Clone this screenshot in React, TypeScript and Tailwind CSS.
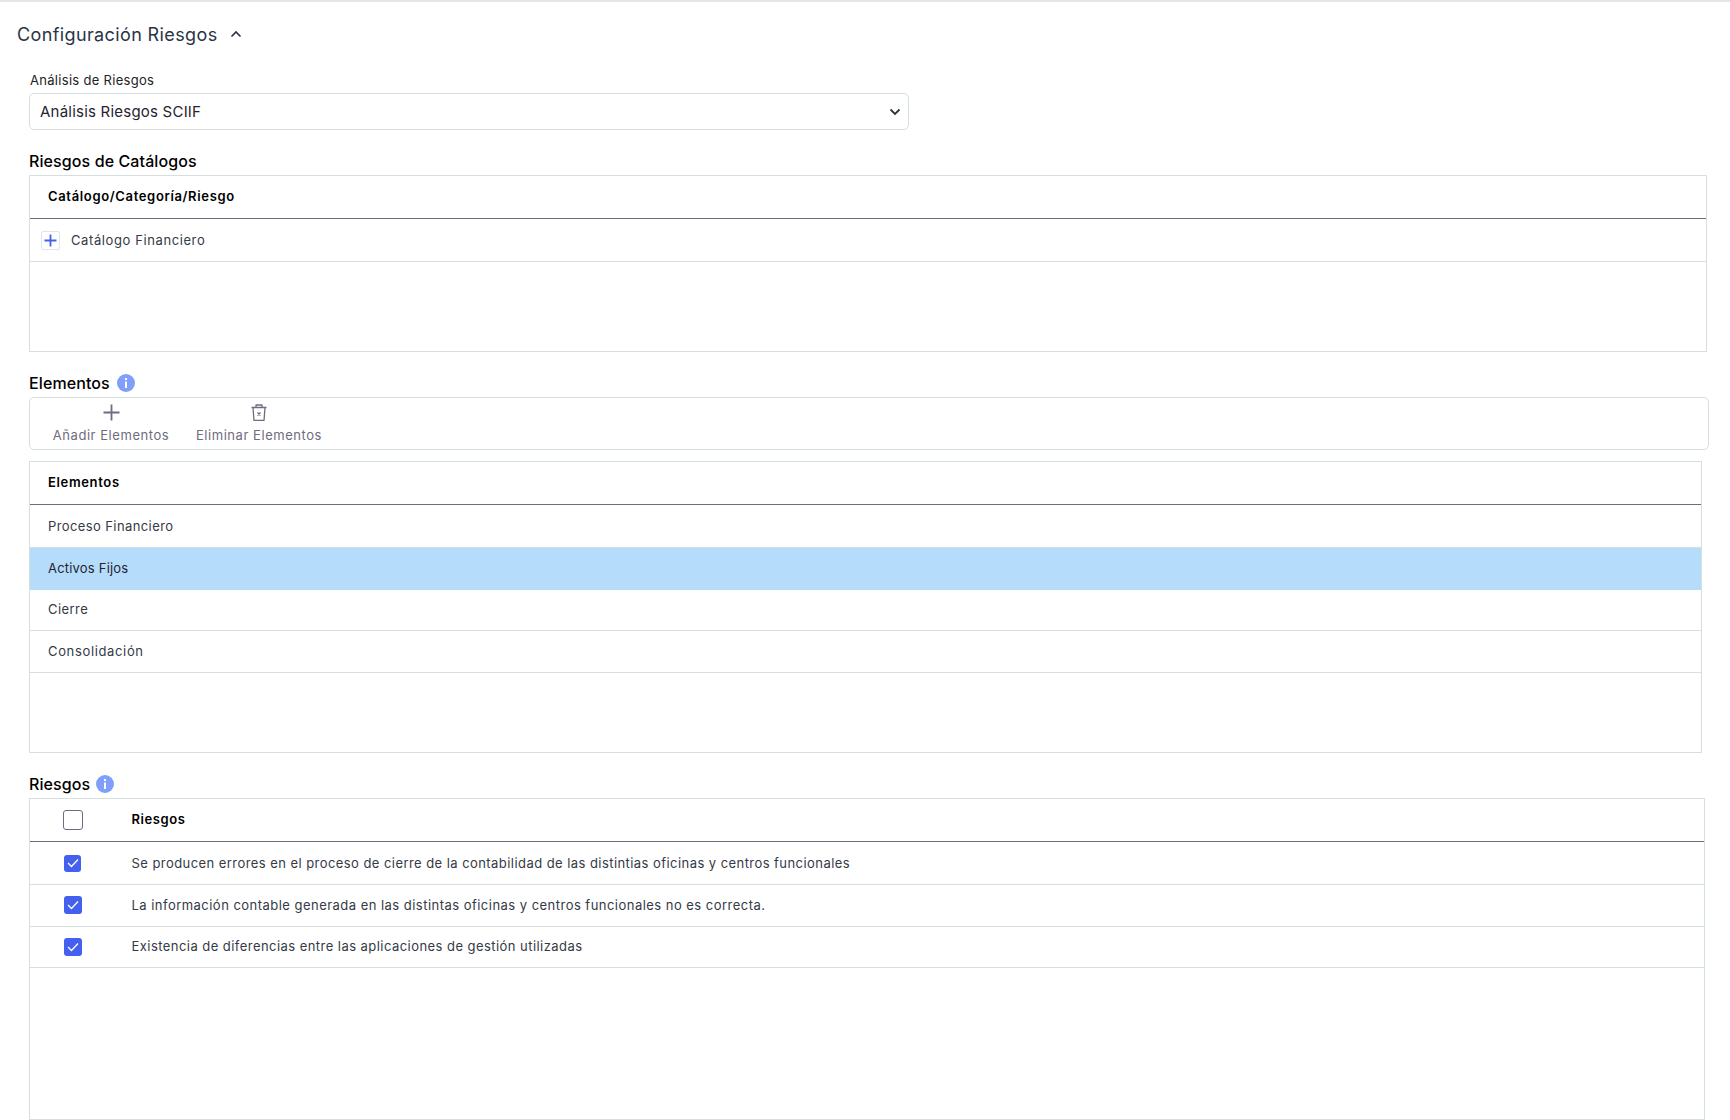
import React from "react";

const font = { fontFamily: '"Inter", "Open Sans", sans-serif' };

function Info() {
  return (
    <svg width="18" height="18" viewBox="0 0 18 18" className="shrink-0">
      <circle cx="9" cy="9" r="9" fill="#7f9ffb" />
      <rect x="8" y="7.5" width="2" height="6.5" fill="#fff" />
      <rect x="8" y="4" width="2" height="2" fill="#fff" />
    </svg>
  );
}

function Check({ size }: { size: string }) {
  return (
    <span className={`${size} rounded-[3px] bg-[#4361ee] flex items-center justify-center`}>
      <svg width="12" height="10" viewBox="0 0 12 10" fill="none">
        <path d="M1 5l3.5 3.5L11 1.5" stroke="#fff" strokeWidth="1.3" />
      </svg>
    </span>
  );
}

function HeaderCell({ children }: { children: React.ReactNode }) {
  return (
    <div className="h-[43px] border-b border-[#6f6c80] pl-[18px] flex items-center text-[13px] tracking-[0.65px] font-semibold text-black">
      {children}
    </div>
  );
}

const rowText = "text-[13px] tracking-[0.45px] text-[#343a46]";
const heading = "text-[16px] tracking-[0.1px] leading-[20px] font-medium text-black";

export default function App() {
  return (
    <div className="w-[1730px] h-[1120px] bg-white overflow-hidden border-t-2 border-[#e5e5e5]" style={font}>
      <div className="pl-[17px] pt-[22px] h-[62px] flex items-start gap-[12px]">
        <span className="text-[18px] tracking-[0.38px] leading-[22px] text-[#2b3444]">Configuración Riesgos</span>
        <svg width="12" height="8" viewBox="0 0 12 8" fill="none" className="mt-[6px]">
          <path d="M1.5 6.5L6 2l4.5 4.5" stroke="#2b3444" strokeWidth="1.6" />
        </svg>
      </div>

      <div className="pl-[29px]">
        <div className="h-[29px] pt-[7px] pl-px text-[13px] tracking-[0.3px] leading-[18px] text-[#222]">Análisis de Riesgos</div>
        <div className="w-[880px] h-[37px] border border-[#d5dfdd] rounded-[5px] flex items-center justify-between pl-[10px] pr-[7px]">
          <span className="text-[15px] tracking-[0.22px] pt-px text-[#1f2430]">Análisis Riesgos SCIIF</span>
          <svg width="12" height="8" viewBox="0 0 12 8" fill="none">
            <path d="M1.5 1.5L6 6l4.5-4.5" stroke="#2b3444" strokeWidth="1.8" />
          </svg>
        </div>

        <div className="h-[45px] flex items-end pb-[4px]"><span className={heading}>Riesgos de Catálogos</span></div>
        <div className="w-[1678px] h-[177px] border border-[#d5dfdd]">
          <HeaderCell>Catálogo/Categoría/Riesgo</HeaderCell>
          <div className="h-[43px] border-b border-[#d5dfdd] flex items-center pl-[11px] gap-[11px]">
            <span className="w-[19px] h-[19px] border border-[#dfe5e8] rounded-[2px] flex items-center justify-center">
              <svg width="13" height="13" viewBox="0 0 13 13">
                <path d="M6.5 0.5v12M0.5 6.5h12" stroke="#4361ee" strokeWidth="1.8" />
              </svg>
            </span>
            <span className="text-[13px] tracking-[0.6px] text-[#343a46] pt-px">Catálogo Financiero</span>
          </div>
        </div>

        <div className="h-[45px] flex items-end pb-[4px] gap-[7px]">
          <span className={heading}>Elementos</span>
          <span className="pb-px"><Info /></span>
        </div>
        <div className="w-[1680px] h-[53px] border border-[#d5dfdd] rounded-[5px] flex pl-[7px] text-[13px] tracking-[0.55px] text-[#6f6c80]">
          <div className="w-[148px] flex flex-col items-center pt-[6px]">
            <svg width="17" height="17" viewBox="0 0 17 17"><path d="M8.5 0.5v16M0.5 8.5h16" stroke="#6f6c80" strokeWidth="1.8" /></svg>
            <span className="leading-[18px] mt-[5px]">Añadir Elementos</span>
          </div>
          <div className="w-[148px] flex flex-col items-center pt-[6px]">
            <svg width="16" height="17" viewBox="0 0 16 17" fill="none" stroke="#6f6c80" strokeWidth="1.3" strokeLinejoin="round">
              <path d="M0.5 3.5h15M2 3.5l1 13h10l1-13M5 3.5V1h6v2.5" />
              <path d="M6.5 8.5l3 3M9.5 8.5l-3 3" strokeWidth="1.4" />
            </svg>
            <span className="leading-[18px] mt-[5px]">Eliminar Elementos</span>
          </div>
        </div>

        <div className="mt-[11px] w-[1673px] h-[292px] border border-[#d5dfdd]">
          <HeaderCell>Elementos</HeaderCell>
          <div className={`h-[43px] border-b border-[#d5dfdd] flex items-center pl-[18px] pt-px text-[13px] tracking-[0.4px] text-[#343a46]`}>Proceso Financiero</div>
          <div className="h-[42px] bg-[#b5dcfb] flex items-center pl-[18px] text-[13px] tracking-[0.2px] text-[#1f2430]">Activos Fijos</div>
          <div className={`h-[41px] border-b border-[#d5dfdd] flex items-center pl-[18px] ${rowText}`}>Cierre</div>
          <div className={`h-[42px] border-b border-[#d5dfdd] flex items-center pl-[18px] text-[13px] tracking-[0.65px] text-[#343a46]`}>Consolidación</div>
        </div>

        <div className="h-[45px] flex items-end pb-[4px] gap-[6px]">
          <span className={heading}>Riesgos</span>
          <span className="pb-px"><Info /></span>
        </div>
        <div className="w-[1676px] h-[322px] border border-[#d5dfdd]">
          <div className="h-[43px] border-b border-[#6f6c80] flex items-center text-[13px] tracking-[0.6px] font-semibold text-black">
            <div className="w-[101.5px] pl-[33px]">
              <span className="block w-[20px] h-[20px] border border-[#6f6c80] rounded-[3px]" />
            </div>
            Riesgos
          </div>
          {[
            "Se producen errores en el proceso de cierre de la contabilidad de las distintias oficinas y centros funcionales",
            "La información contable generada en las distintas oficinas y centros funcionales no es correcta.",
            "Existencia de diferencias entre las aplicaciones de gestión utilizadas",
          ].map((t, i) => (
            <div key={i} className={`${i === 0 ? "h-[43px]" : i === 1 ? "h-[42px]" : "h-[41px]"} border-b border-[#d5dfdd] flex items-center ${rowText}`}>
              <div className="w-[101.5px] pl-[34px]">
                <Check size={i === 0 ? "w-[17px] h-[17px]" : "w-[18px] h-[18px] -mt-px"} />
              </div>
              <span className={i === 0 ? "pt-px tracking-[0.44px]" : i === 1 ? "tracking-[0.47px]" : ""}>{t}</span>
            </div>
          ))}
        </div>
      </div>
    </div>
  );
}
